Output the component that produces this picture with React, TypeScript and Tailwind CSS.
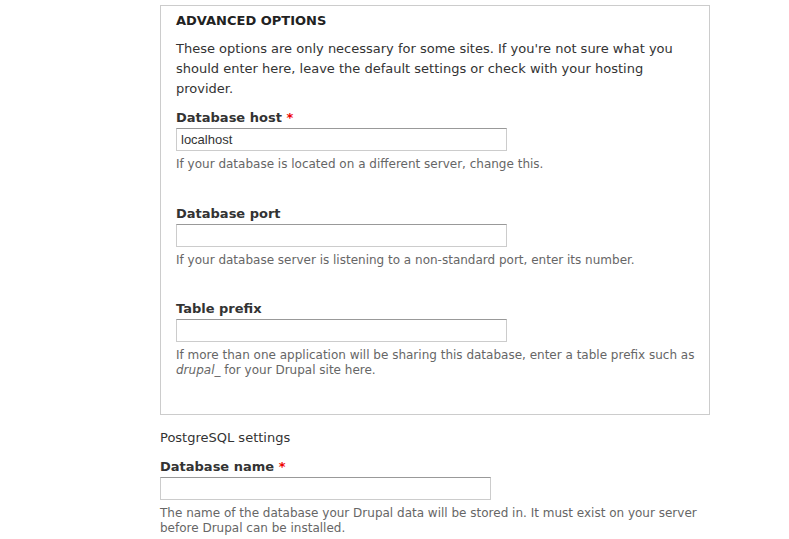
import React from 'react';

const Required = () => <span className="text-[#e00] font-bold"> *</span>;

const Field: React.FC<{
  label: string;
  required?: boolean;
  value?: string;
  children: React.ReactNode;
  className?: string;
}> = ({ label, required, value, children, className }) => (
  <div className={className}>
    <label className="block font-bold leading-[20px]">
      {label}
      {required && <Required />}
    </label>
    <input
      type="text"
      readOnly
      defaultValue={value}
      className="block w-[331px] h-[23px] border border-[#ccc] border-t-[#999] px-[4px] font-['Liberation_Sans',sans-serif] text-[13px] text-[#333] bg-white outline-none"
    />
    <div className="mt-[6px] text-[12px] leading-[15px] text-[#666]">{children}</div>
  </div>
);

export default function App() {
  return (
    <div className="w-[789px] h-[539px] overflow-hidden bg-white pl-[160px] pt-[5px] font-['DejaVu_Sans',sans-serif] text-[13px] text-[#333]">
      {/* Advanced options */}
      <div className="w-[550px] border border-[#ccc] pl-[15px] pr-[10px] pt-[5px] pb-[36px]">
        <h2 className="font-bold uppercase leading-[20px] text-[#222]">Advanced options</h2>
        <p className="mt-[8px] leading-[20px] pr-[3px]">
          These options are only necessary for some sites. If you're not sure what you should enter here, leave the
          default settings or check with your hosting provider.
        </p>

        <Field label="Database host" required value="localhost" className="mt-[9px]">
          If your database is located on a different server, change this.
        </Field>

        <Field label="Database port" className="mt-[32px]">
          If your database server is listening to a non-standard port, enter its number.
        </Field>

        <Field label="Table prefix" className="mt-[31px]">
          If more than one application will be sharing this database, enter a table prefix such as{' '}
          <em>drupal_</em> for your Drupal site here.
        </Field>
      </div>

      <div className="mt-[13px] leading-[20px]">PostgreSQL settings</div>

      <Field label="Database name" required className="mt-[9px] w-[550px]">
        The name of the database your Drupal data will be stored in. It must exist on your server before Drupal can
        be installed.
      </Field>
    </div>
  );
}
